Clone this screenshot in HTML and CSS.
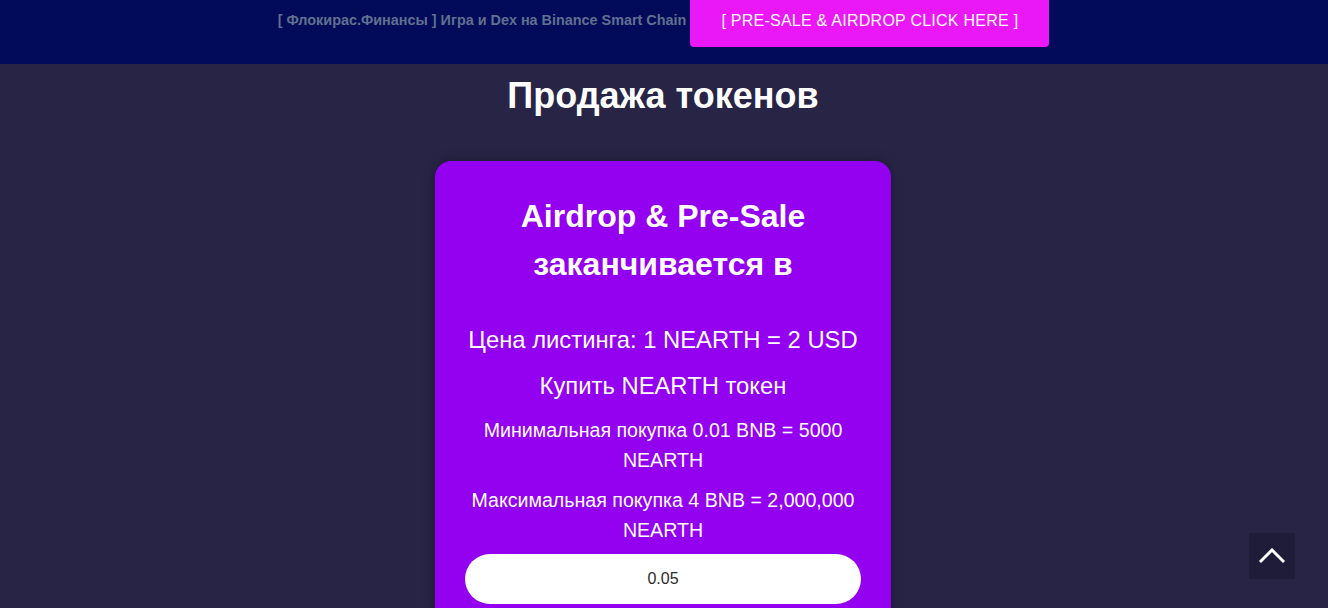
FILE: index.html
```html
<!DOCTYPE html>
<html lang="ru">
<head>
<meta charset="utf-8">
<title>Продажа токенов</title>
<link rel="stylesheet" href="styles.css">
</head>
<body>
<header class="topbar">
  <div class="topbar-inner">
    <span class="brand">[ Флокирас.Финансы ] Игра и Dex на Binance Smart Chain</span>
    <a class="presale-btn" href="#">[ PRE-SALE &amp; AIRDROP CLICK HERE ]</a>
  </div>
</header>
<main class="main">
  <h1 class="page-title">Продажа токенов</h1>
  <section class="card">
    <h2 class="card-title">Airdrop &amp; Pre-Sale заканчивается в</h2>
    <p class="price">Цена листинга: 1 NEARTH = 2 USD</p>
    <p class="buy">Купить NEARTH токен</p>
    <p class="limit">Минимальная покупка 0.01 BNB = 5000 NEARTH</p>
    <p class="limit">Максимальная покупка 4 BNB = 2,000,000 NEARTH</p>
    <input class="amount" type="text" value="0.05">
  </section>
</main>
<a class="to-top" href="#">
  <svg width="26" height="16" viewBox="0 0 26 16"><path d="M2 13 L13 2 L24 13" fill="none" stroke="#fff" stroke-width="3" stroke-linecap="square"/></svg>
</a>
</body>
</html>
```
FILE: styles.css
```css
html, body {
  margin: 0;
  padding: 0;
}
body {
  background: #282446;
  font-family: "Liberation Sans", Arial, sans-serif;
  color: #fff;
  height: 608px;
  overflow: hidden;
}
.topbar {
  background: #020a5a;
  height: 64px;
}
.topbar-inner {
  display: flex;
  justify-content: center;
  align-items: flex-start;
  gap: 4px;
  padding-right: 1px;
}
.brand {
  font-size: 14.4px;
  font-weight: bold;
  color: #60708f;
  padding-top: 12px;
  line-height: 16px;
}
.presale-btn {
  display: block;
  background: #ea17f6;
  color: #fff;
  text-decoration: none;
  font-size: 16px;
  letter-spacing: 0.25px;
  line-height: 18px;
  width: 359px;
  box-sizing: border-box;
  text-align: center;
  padding: 12px 0 17px;
  border-radius: 0 0 4px 4px;
}
.main {
  display: flex;
  flex-direction: column;
  align-items: center;
  padding-right: 2px;
}
.page-title {
  margin: 12px 0 0;
  font-size: 36px;
  line-height: 40px;
  font-weight: bold;
}
.card {
  margin-top: 45px;
  width: 456px;
  box-sizing: border-box;
  background: #9400f0;
  border-radius: 16px;
  padding: 31px 30px 20px;
  text-align: center;
  box-shadow: 0 0 12px rgba(0,0,0,0.35);
}
.card-title {
  margin: 0 0 38px;
  font-size: 32px;
  line-height: 48px;
  font-weight: bold;
}
.price, .buy {
  margin: 0 0 18px;
  font-size: 23.8px;
  line-height: 28px;
}
.buy {
  margin-bottom: 15px;
}
.limit {
  margin: 0 0 10px;
  font-size: 19.6px;
  line-height: 30px;
}
.limit + .limit {
  margin-bottom: 9px;
}
.amount {
  display: block;
  width: 100%;
  height: 50px;
  box-sizing: border-box;
  border: none;
  border-radius: 25px;
  background: #fff;
  text-align: center;
  font-family: "Liberation Sans", Arial, sans-serif;
  font-size: 16px;
  color: #2a2a2a;
  outline: none;
}
.to-top {
  position: fixed;
  right: 33px;
  bottom: 29px;
  width: 46px;
  height: 46px;
  background: #1e1c38;
  border-radius: 2px;
  display: flex;
  align-items: center;
  justify-content: center;
}
```
